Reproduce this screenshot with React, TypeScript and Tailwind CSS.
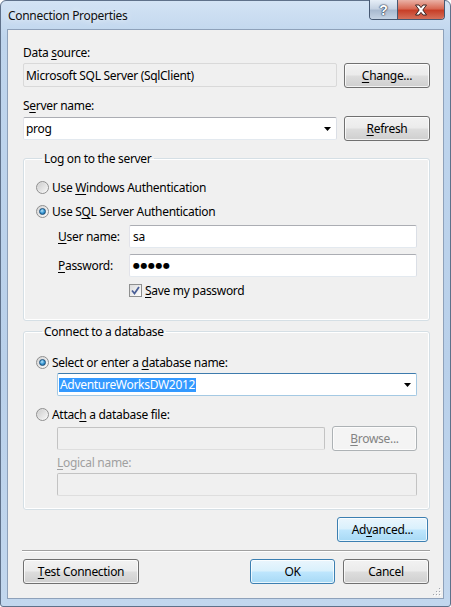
import React from "react";

// Access-key underline used on labels and buttons
const U = ({ children }: { children: React.ReactNode }) => (
  <span className="underline decoration-1 underline-offset-[2px]">{children}</span>
);

type BtnKind = "normal" | "blue" | "disabled";

function Button({
  kind = "normal",
  className = "",
  children,
}: {
  kind?: BtnKind;
  className?: string;
  children: React.ReactNode;
}) {
  const look =
    kind === "blue"
      ? "border-[#3c7fb1] bg-[linear-gradient(180deg,#eaf6fd_0%,#d9f0fc_48%,#bee6fd_52%,#a7d9f5_100%)] text-black"
      : kind === "disabled"
        ? "border-[#adb2b5] bg-[#f4f4f4] text-[#838383]"
        : "border-[#707070] bg-[linear-gradient(180deg,#f2f2f2_0%,#ebebeb_48%,#dddddd_52%,#cfcfcf_100%)] text-black";
  return (
    <button
      type="button"
      className={`flex h-[25px] shrink-0 items-center justify-center rounded-[3px] border shadow-[inset_0_0_0_1px_rgba(255,255,255,0.75)] ${look} ${className}`}
    >
      {children}
    </button>
  );
}

function Radio({ checked = false }: { checked?: boolean }) {
  return (
    <span className="flex h-[13px] w-[13px] shrink-0 items-center justify-center rounded-full border border-[#8f8f8f] bg-[linear-gradient(135deg,#d4d4d4_0%,#fbfbfb_100%)]">
      {checked ? (
        <span className="h-[7px] w-[7px] rounded-full border border-[#1b4f7a] bg-[radial-gradient(circle_at_40%_35%,#b8e4fa_0%,#3b9ad6_50%,#135b91_100%)]" />
      ) : (
        <span className="h-[9px] w-[9px] rounded-full bg-[linear-gradient(135deg,#cfcfcf_0%,#f4f4f4_100%)]" />
      )}
    </span>
  );
}

function Checkbox() {
  return (
    <span className="flex h-[13px] w-[13px] shrink-0 items-center justify-center border border-[#8e8f8f] bg-[linear-gradient(135deg,#dcdcdc_0%,#ffffff_100%)]">
      <svg width="9" height="9" viewBox="0 0 9 9">
        <path d="M1 4.5 L3.5 7.5 L8 1" fill="none" stroke="#4a5f97" strokeWidth="1.8" />
      </svg>
    </span>
  );
}

const Arrow = () => (
  <svg width="7" height="4" viewBox="0 0 7 4" className="shrink-0">
    <path d="M0 0H7L3.5 4Z" fill="#000" />
  </svg>
);

const textBox =
  "h-[23px] rounded-[2px] border border-[#abadb3] border-l-[#e2e3ea] border-r-[#dbdfe6] border-b-[#e3e9ef] bg-white";
const disabledBox =
  "h-[23px] rounded-[2px] border border-[#c3c3c3] border-b-[#dedede] bg-[#f0f0f0]";

function CaptionButtons() {
  return (
    <div className="mr-[5px] -mt-[1px] flex h-[20px] overflow-hidden rounded-b-[4px] border border-t-0 border-[#465872]">
      <div className="flex w-[28px] items-center justify-center border-r border-[#465872] bg-[linear-gradient(180deg,#e6eef7_0%,#c6d3e3_45%,#a9bad0_55%,#c5d3e4_100%)]">
        <span className="font-['Liberation_Sans',sans-serif] text-[14px] font-bold leading-none tracking-normal text-white [text-shadow:0_0_1px_#2b3a50,0_0_1px_#2b3a50,0_0_2px_#2b3a50]">
          ?
        </span>
      </div>
      <div className="flex w-[46px] items-center justify-center bg-[linear-gradient(180deg,#eab2a6_0%,#d86a55_45%,#c73f28_55%,#d5705a_100%)]">
        <svg width="14" height="12" viewBox="0 0 14 12">
          <path
            d="M1.5 1 H5 L7 3.6 L9 1 H12.5 L8.8 6 L12.5 11 H9 L7 8.4 L5 11 H1.5 L5.2 6 Z"
            fill="#fff"
            stroke="#3b2220"
            strokeWidth="1"
            strokeLinejoin="round"
          />
        </svg>
      </div>
    </div>
  );
}

export default function App() {
  return (
    <div className="h-[607px] w-[451px] bg-white font-['Noto_Sans',sans-serif] text-[12px] leading-[15px] tracking-[-0.3px] text-black">
      <div className="flex h-full flex-col rounded-t-[6px] rounded-b-[3px] border border-[#5f718a] bg-[linear-gradient(180deg,#d3e3f4_0%,#bfd5ed_6%,#b9d0ea_60%,#c2d7ee_100%)]">
        {/* title bar */}
        <div className="flex h-[28px] shrink-0 items-start justify-between">
          <div className="pl-[7px] pt-[7px] text-[#101010] [text-shadow:0_0_6px_rgba(255,255,255,0.9)]">
            Connection Properties
          </div>
          <CaptionButtons />
        </div>

        {/* client area */}
        <div className="relative mx-[6px] flex flex-1 flex-col border border-[#8ea1ba] bg-[#f0f0f0] pl-[15px] pr-[13px]">
          <div className="mt-[15px]">
            Data <U>s</U>ource:
          </div>
          <div className="mt-[3px] flex items-start gap-[7px]">
            <div className="flex h-[24px] flex-1 items-center rounded-[2px] border border-[#d9d9d9] bg-[#f0f0f0] pl-[2px]">
              Microsoft SQL Server (SqlClient)
            </div>
            <Button className="w-[86px]">
              <U>C</U>hange...
            </Button>
          </div>

          <div className="mt-[10px]">
            S<U>e</U>rver name:
          </div>
          <div className="mt-[3px] flex items-start gap-[7px]">
            <div className={`mt-[1px] flex flex-1 items-center justify-between pl-[2px] pr-[5px] ${textBox}`}>
              <span>prog</span>
              <Arrow />
            </div>
            <Button className="w-[86px]">
              <U>R</U>efresh
            </Button>
          </div>

          {/* log on group */}
          <fieldset className="mt-[10px] rounded-[3px] border border-[#d5dfe5] pb-[22px] pl-[12px] pr-[12px] shadow-[inset_0_0_0_1px_#fff]">
            <legend className="ml-[6px] px-[2px]">Log on to the server</legend>
            <div className="mt-[14px] flex items-center gap-[3px]">
              <Radio />
              <span>
                Use <U>W</U>indows Authentication
              </span>
            </div>
            <div className="mt-[9px] flex items-center gap-[3px]">
              <Radio checked />
              <span>
                Use S<U>Q</U>L Server Authentication
              </span>
            </div>
            <div className="mt-[6px] flex items-center pl-[22px]">
              <span className="w-[71px]">
                <U>U</U>ser name:
              </span>
              <div className={`flex flex-1 items-center pl-[3px] ${textBox}`}>sa</div>
            </div>
            <div className="mt-[6px] flex items-center pl-[22px]">
              <span className="w-[71px]">
                <U>P</U>assword:
              </span>
              <div className={`flex flex-1 items-center pl-[3px] ${textBox}`}>
                <span className="font-['DejaVu_Sans',sans-serif] text-[8px] font-bold tracking-[0.5px]">●●●●●</span>
              </div>
            </div>
            <div className="mt-[6px] flex items-center gap-[3px] pl-[93px]">
              <Checkbox />
              <span>
                <U>S</U>ave my password
              </span>
            </div>
          </fieldset>

          {/* database group */}
          <fieldset className="mt-[3px] rounded-[3px] border border-[#d5dfe5] pb-[13px] pl-[12px] pr-[12px] shadow-[inset_0_0_0_1px_#fff]">
            <legend className="ml-[6px] px-[2px]">Connect to a database</legend>
            <div className="mt-[16px] flex items-center gap-[3px]">
              <Radio checked />
              <span>
                Select or enter a <U>d</U>atabase name:
              </span>
            </div>
            <div className="mt-[3px] pl-[21px]">
              <div className="flex h-[23px] items-center justify-between rounded-[2px] border border-[#a4c9e3] border-t-[#3d7bad] bg-white pl-[1px] pr-[5px]">
                <span className="bg-[#3399ff] px-[1px] leading-[14px] text-white">AdventureWorksDW2012</span>
                <Arrow />
              </div>
            </div>
            <div className="mt-[11px] flex items-center gap-[3px]">
              <Radio />
              <span>
                Attac<U>h</U> a database file:
              </span>
            </div>
            <div className="mt-[4px] flex items-start gap-[7px] pl-[21px]">
              <div className={`mt-[1px] flex-1 ${disabledBox}`} />
              <Button kind="disabled" className="w-[85px]">
                <U>B</U>rowse...
              </Button>
            </div>
            <div className="mt-[4px] pl-[21px] text-[#a0a0a0]">
              <U>L</U>ogical name:
            </div>
            <div className="mt-[3px] pl-[21px]">
              <div className={disabledBox} />
            </div>
          </fieldset>

          <div className="mt-[7px] flex justify-end pr-[2px]">
            <Button kind="blue" className="w-[91px]">
              Ad<U>v</U>anced...
            </Button>
          </div>

          <div className="-ml-[1px] mt-[8px] h-[2px] border-t border-b border-t-[#a0a0a0] border-b-white" />

          <div className="mt-[7px] flex items-start pr-[1px]">
            <Button className="w-[116px]">
              <U>T</U>est Connection
            </Button>
            <div className="flex-1" />
            <Button kind="blue" className="w-[85px]">
              OK
            </Button>
            <Button className="ml-[8px] w-[86px]">Cancel</Button>
          </div>

          {/* size grip */}
          <svg width="10" height="10" viewBox="0 0 10 10" className="absolute bottom-[1px] right-[1px]">
            {[
              [8, 2],
              [5, 5],
              [8, 5],
              [2, 8],
              [5, 8],
              [8, 8],
            ].map(([x, y]) => (
              <g key={`${x}-${y}`}>
                <rect x={x} y={y} width="1" height="1" fill="#fff" />
                <rect x={x - 1} y={y - 1} width="1" height="1" fill="#a0a4ab" />
              </g>
            ))}
          </svg>
        </div>
        <div className="h-[7px] shrink-0" />
      </div>
    </div>
  );
}
